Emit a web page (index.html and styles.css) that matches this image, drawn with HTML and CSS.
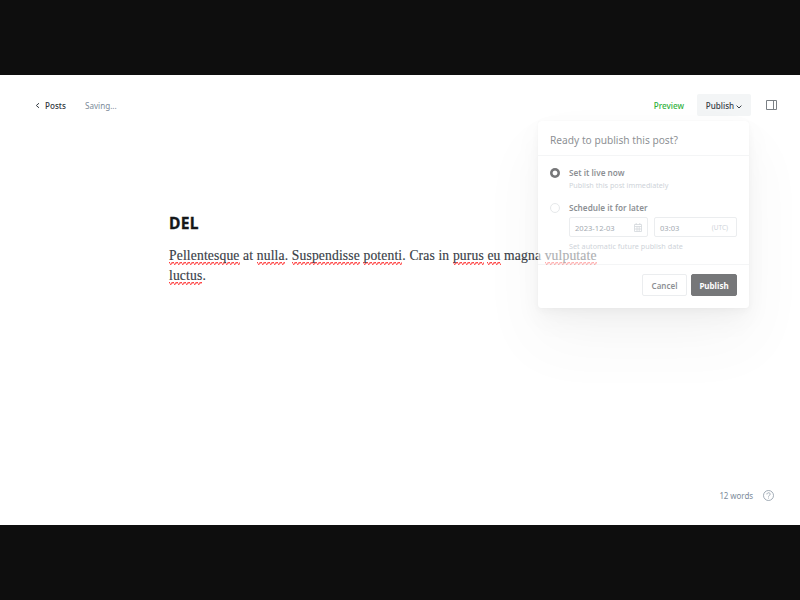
FILE: index.html
```html
<!DOCTYPE html>
<html lang="en">
<head>
<meta charset="utf-8">
<title>Post editor</title>
<link rel="stylesheet" href="styles.css">
</head>
<body>
<div class="editor">
  <header class="topbar">
    <a class="back"><svg width="5" height="7" viewBox="0 0 5 7"><path d="M4 1.2 1.3 3.5 4 5.8"/></svg><span class="t-posts">Posts</span></a>
    <span class="status">Saving...</span>
    <div class="actions">
      <span class="preview">Preview</span>
      <div class="menu">
        <button class="publish-toggle"><span class="t-publish">Publish</span><svg width="6" height="4" viewBox="0 0 6 4"><path d="M.6.6 3 3 5.4.6"/></svg></button>
        <section class="popup">
          <h2><span>Ready to publish this post?</span></h2>
          <div class="options">
            <div class="option">
              <i class="radio checked"></i>
              <div class="detail"><b class="t-live">Set it live now</b><small class="t-immediate">Publish this post immediately</small></div>
            </div>
            <div class="option later">
              <i class="radio"></i>
              <div class="detail"><b class="t-later">Schedule it for later</b>
                <div class="fields">
                  <div class="field date"><span>2023-12-03</span><svg width="8" height="9" viewBox="0 0 8 9"><path d="M.5 1.5h7v7h-7zM.5 3.5h7M2.2 0v2M5.8 0v2M.5 6h7M3 3.5v5M5.2 3.5v5"/></svg></div>
                  <div class="field time"><span>03:03</span><em>(UTC)</em></div>
                </div>
                <small class="t-auto">Set automatic future publish date</small></div>
            </div>
          </div>
          <footer><button class="btn">Cancel</button><button class="btn primary">Publish</button></footer>
        </section>
      </div>
      <svg class="sidebar-icon" width="11" height="10" viewBox="0 0 11 10"><path d="M.5.5h10v9H.5zM7.5.5v9"/></svg>
    </div>
  </header>
  <main>
    <h1>DEL</h1>
    <p><u>Pellentesque</u> at <u>nulla</u>. <u>Suspendisse</u> <u>potenti</u>. Cras in <u>purus</u> <u>eu</u> magna <u>vulputate</u> <u>luctus</u>.</p>
  </main>
  <div class="bottom"><span>12 words</span><svg width="11" height="11" viewBox="0 0 11 11"><circle cx="5.5" cy="5.5" r="5"/><path d="M3.9 4.4c0-2.2 3.3-2.1 3.3-.2 0 1.2-1.7 1.2-1.7 2.4M5.5 7.6v.9"/></svg></div>
</div>
</body>
</html>
```

FILE: styles.css
```css
* { box-sizing: border-box; }
body { margin: 0; height: 600px; padding: 75px 0; background: #0e0e0e; font-family: "Noto Sans", sans-serif; overflow: hidden; }
svg { fill: none; stroke: #394047; stroke-width: 1; flex: none; }
button { font-family: inherit; padding: 0; }
.editor { height: 450px; background: #fff; display: flex; flex-direction: column; overflow: hidden; }
.topbar { height: 60px; flex: none; display: flex; align-items: center; padding: 0 24px 0 35px; font-size: 8.1px; white-space: nowrap; }
.back { display: flex; align-items: center; width: 50px; color: #30373d; font-weight: 500; }
.back svg { margin-right: 5px; }
.status { color: #7c8b9a; }
.actions { margin-left: auto; display: flex; align-items: center; }
.preview { color: #30b13c; font-weight: 500; margin-right: 13px; }
.menu { position: relative; z-index: 1; }
.publish-toggle { width: 54px; height: 22px; border: 0; border-radius: 2px; background: #f3f5f6; display: flex; align-items: center; justify-content: center; gap: 2px; font-size: 8.1px; font-weight: 500; color: #394047; }
.publish-toggle svg { margin-top: 3px; }
.sidebar-icon { margin-left: 15px; margin-right: -1px; stroke: #7b8085; }

.popup { position: absolute; top: 27px; right: 2px; width: 211px; height: 187px; border-radius: 3px; background: #fff; opacity: .58; box-shadow: 0 0 1px rgba(0,0,0,.1), 0 3px 7px rgba(0,0,0,.05), 0 12px 24px rgba(0,0,0,.06), 0 32px 60px rgba(0,0,0,.06); color: #394047; }
.popup h2 { margin: 0; height: 35px; padding: 3px 12px 0; display: flex; align-items: center; border-bottom: 1px solid #edeff0; font-size: 10.2px; font-weight: 400; }
.options { height: 109px; padding: 11px 12px 0; border-bottom: 1px solid #edeff0; }
.option { display: flex; }
.radio { width: 10px; height: 10px; margin: 1px 9px 0 0; border: 1px solid #d5d9dc; border-radius: 50%; flex: none; }
.radio.checked { border: 0; background: radial-gradient(circle, #fff 2px, #15171a 2.8px); }
.detail { flex: 1; display: flex; flex-direction: column; }
.detail b { font-size: 8.2px; line-height: 12px; font-weight: 600; }
.detail small { font-size: 7.2px; line-height: 12px; color: #abb4be; font-weight: 400; }
.later { margin-top: 11px; }
.fields { display: flex; gap: 6px; margin: 3px 0 3px; }
.field { height: 20px; padding: 1px 8px 0 5px; border: 1px solid #dde1e5; border-radius: 2px; display: flex; align-items: center; justify-content: space-between; font-size: 7.6px; color: #626d79; }
.date { width: 79px; padding-right: 5px; }
.date svg { stroke: #b5bdc4; stroke-width: .8; }
.time { width: 83px; }
.field em { font-style: normal; font-size: 6.5px; color: #abb4be; }
.detail .t-auto { letter-spacing: .03px; }
.popup footer { height: 43px; padding: 0 12px 4px; display: flex; align-items: center; justify-content: flex-end; gap: 4px; }
.btn { width: 45px; height: 22px; padding-top: 1px; border: 1px solid #dde1e5; border-radius: 2px; background: #fff; font-size: 8px; font-weight: 600; color: #394047; }
.btn.primary { width: 46px; background: #15171a; border-color: #15171a; color: #fff; font-weight: 700; }

main { width: 462px; margin: 78px 0 0 169px; }
h1 { margin: 0; height: 20px; font-size: 15.6px; line-height: 20px; font-weight: 700; letter-spacing: .35px; -webkit-text-stroke: .3px #15171a; color: #15171a; }
p { width: 445px; margin: 13px 0 0; font-family: "Liberation Serif", serif; font-size: 13.6px; letter-spacing: .15px; line-height: 20px; color: #394047; -webkit-text-stroke: .15px #394047; }
p u {
  text-decoration: none;
  padding-bottom: 2px;
  background-image:
    linear-gradient(45deg, transparent 65%, #ff3a3a 78%, transparent 90%),
    linear-gradient(135deg, transparent 5%, #ff3a3a 15%, transparent 25%),
    linear-gradient(135deg, transparent 45%, #ff3a3a 55%, transparent 65%),
    linear-gradient(45deg, transparent 25%, #ff3a3a 35%, transparent 48%);
  background-size: 4px 3px;
  background-position: 0 100%;
  background-repeat: repeat-x;
}
.bottom { margin: auto 26px 24px auto; display: flex; align-items: center; gap: 10px; font-size: 8px; letter-spacing: -.08px; line-height: 11px; color: #7c8b9a; }
.bottom svg { stroke: #8b98a5; stroke-width: .8; }
```
